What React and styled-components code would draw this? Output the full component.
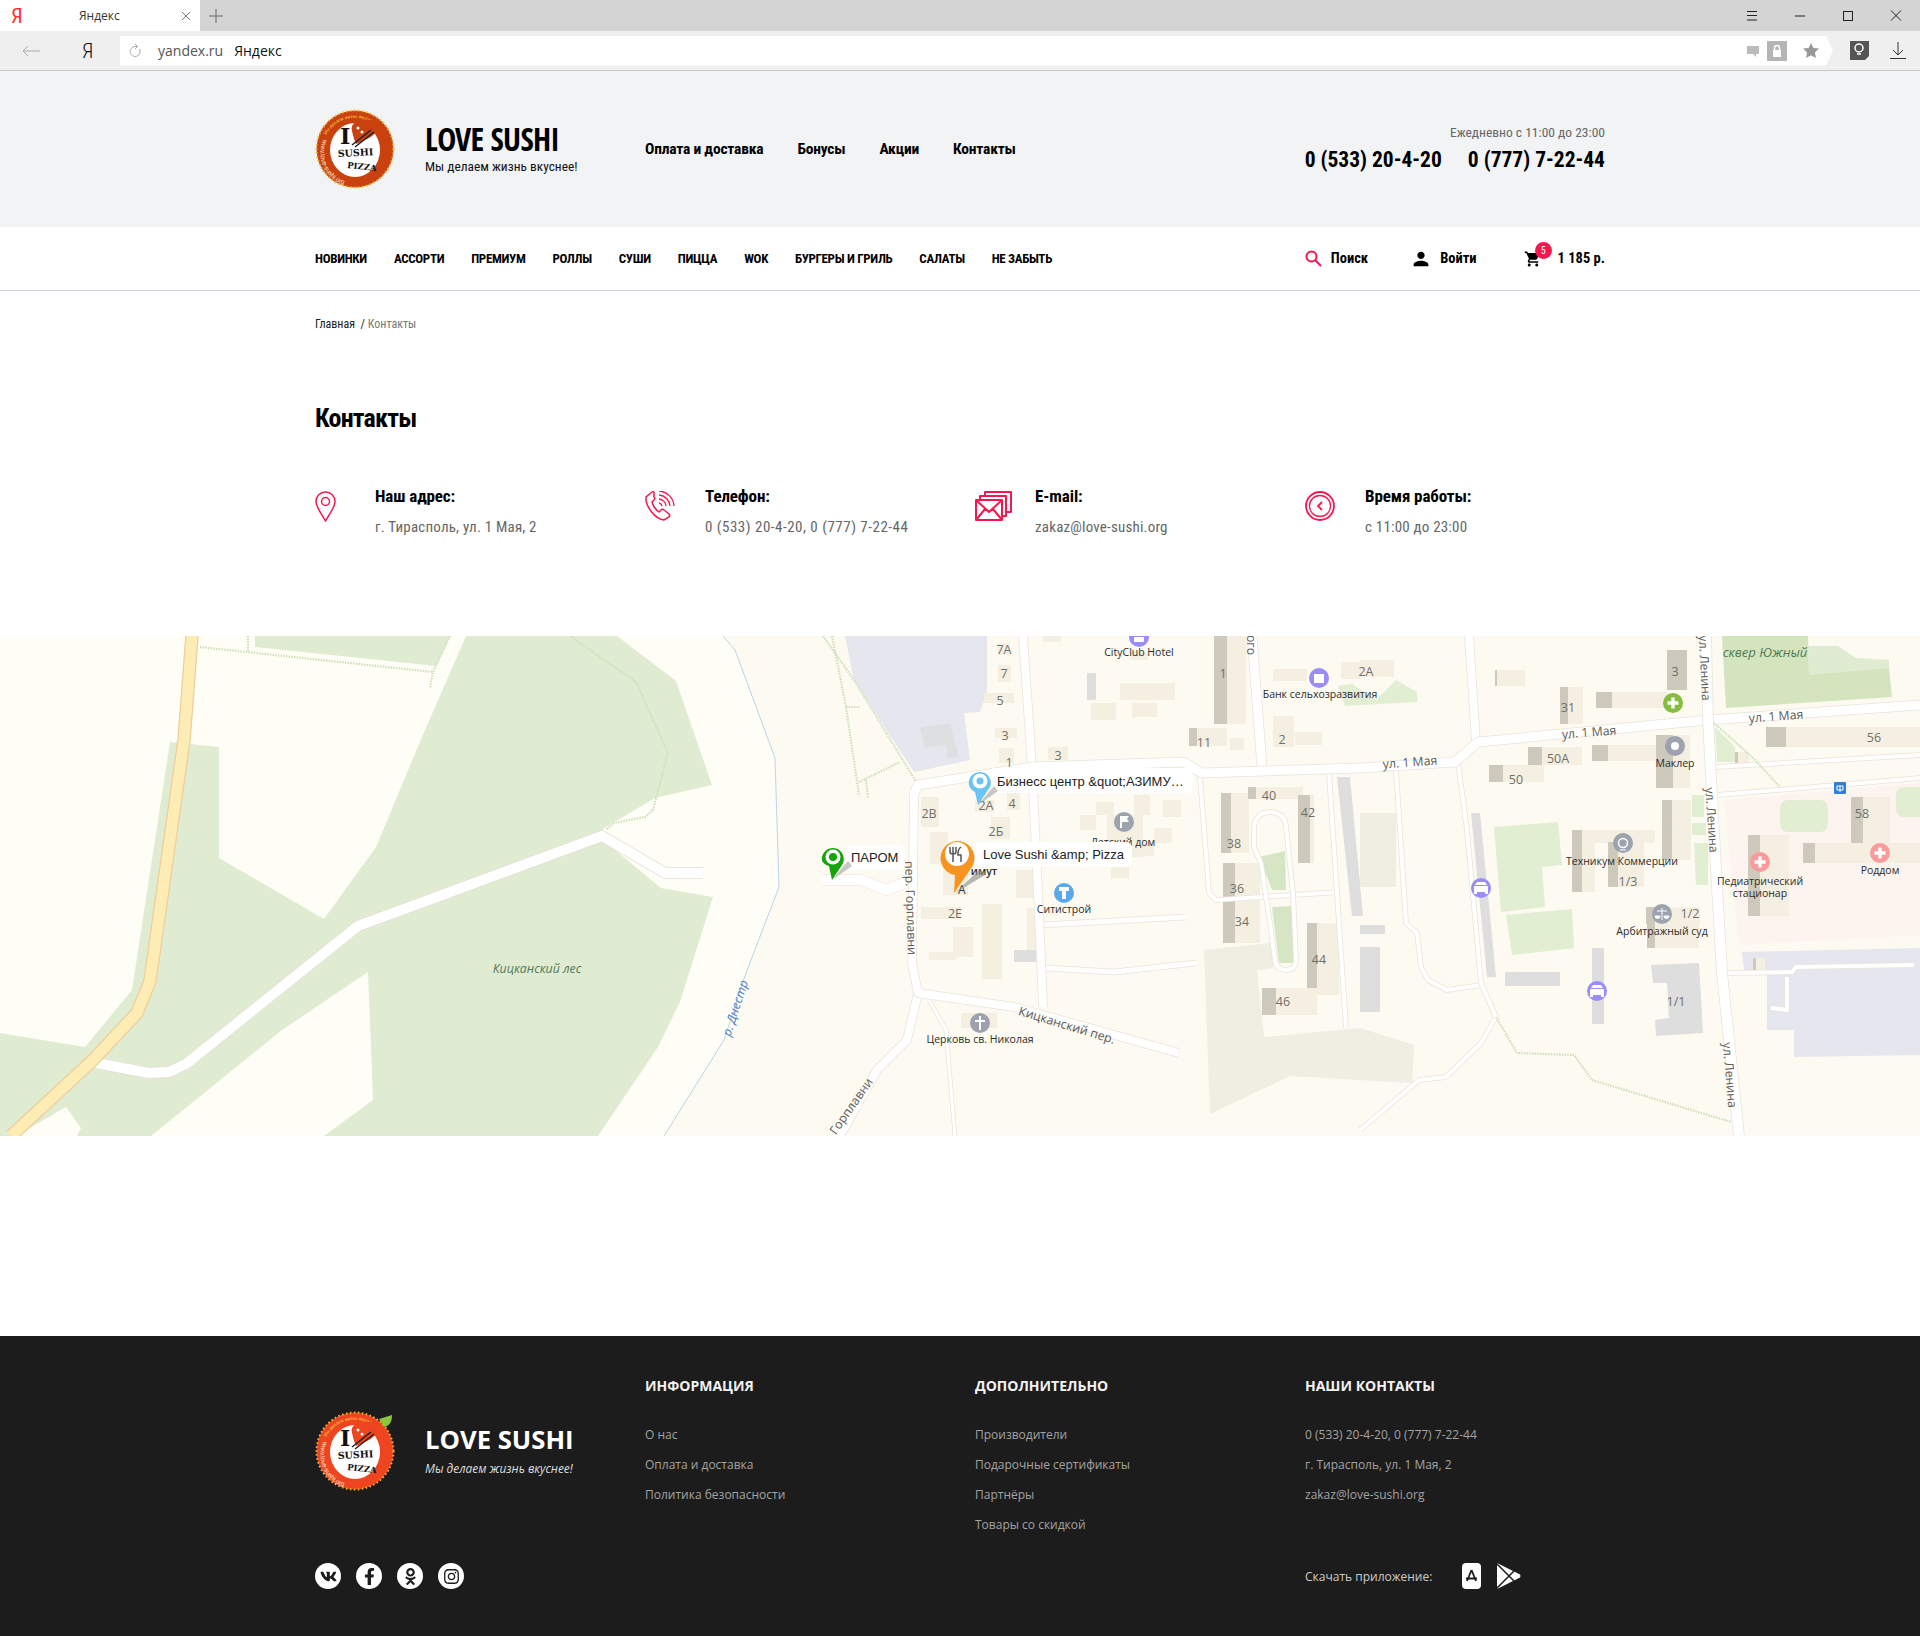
import React from "react";
import styled, { createGlobalStyle } from "styled-components";
import { FaVk, FaFacebookF, FaOdnoklassniki, FaInstagram } from "react-icons/fa";
import { MdPerson, MdShoppingCart } from "react-icons/md";

const din = `"Roboto Condensed", "Open Sans Condensed", "Liberation Sans", sans-serif`;
const open = `"Open Sans", "Noto Sans", sans-serif`;

const GlobalStyle = createGlobalStyle`
    html, body { margin: 0; padding: 0; background: #fff; }
    body { font-family: ${din}; color: #000; }
    a { color: inherit; text-decoration: none; }
    ul { list-style: none; margin: 0; padding: 0; }
`;

/* browser chrome */
const TabStrip = styled.div`
    height: 31px;
    background: #d4d4d4;
    display: flex;
    align-items: stretch;
    font-family: ${open};
`;
const Tab = styled.div`
    width: 200px;
    background: #fff;
    display: flex;
    align-items: center;
    font-size: 12px;
    color: #333;
    .ya { color: #f33; font: 400 21px ${din}; width: 79px; padding-left: 11px; box-sizing: border-box; }
    .name { flex: 1; }
    svg { margin-right: 9px; }
`;
const NewTab = styled.div`
    width: 31px;
    display: flex;
    align-items: center;
    justify-content: center;
`;
const WinButtons = styled.div`
    margin-left: auto;
    display: flex;
    align-items: center;
    gap: 28px;
    padding-right: 14px;
`;
const ToolBar = styled.div`
    height: 40px;
    background: #efefef;
    border-bottom: 1px solid #c9c9c9;
    box-sizing: border-box;
    display: flex;
    align-items: center;
    font-family: ${open};
`;
const NavBack = styled.div`
    width: 120px;
    display: flex;
    align-items: center;
    padding-left: 22px;
    box-sizing: border-box;
    .ya { margin-left: 42px; font: 300 21px ${din}; color: #111; }
`;
const AddressBar = styled.div`
    width: 1713px;
    height: 30px;
    background: #fff;
    display: flex;
    align-items: center;
    font-size: 14px;
    clip-path: polygon(0 0, calc(100% - 7px) 0, 100% 50%, calc(100% - 7px) 100%, 0 100%);
    padding-left: 9px;
    padding-right: 14px;
    box-sizing: border-box;
    .host { margin-left: 17px; color: #555; }
    .title { margin-left: 11px; color: #111; }
    .tools { margin-left: auto; display: flex; align-items: center; gap: 8px; }
`;
const ToolIcons = styled.div`
    flex: 1;
    display: flex;
    align-items: center;
    justify-content: flex-end;
    gap: 21px;
    padding-right: 14px;
`;

/* site header */
const Container = styled.div`
    width: 1290px;
    margin: 0 auto;
`;
const TopBand = styled.header`
    height: 156px;
    background: #f2f3f5;
    & > div { height: 100%; display: flex; align-items: center; }
`;
const Brand = styled.div`
    width: 330px;
    display: flex;
    align-items: center;
    gap: 30px;
    svg { flex: none; }
`;
const BrandName = styled.div`
    font-family: "Open Sans Condensed", ${din};
    font-size: 32px;
    font-weight: 700;
    line-height: 34px;
    letter-spacing: -0.7px;
`;
const BrandTag = styled.div`
    font-size: 13.4px;
    line-height: 18px;
    color: #111;
    margin-top: 2px;
`;
const TopMenu = styled.ul`
    display: flex;
    gap: 34px;
    font-size: 15.5px;
    font-weight: 700;
    letter-spacing: -0.2px;
`;
const Phones = styled.div`
    margin-left: auto;
    text-align: right;
    .hours { font-size: 13.5px; color: #666; line-height: 18px; }
    .nums { display: flex; gap: 26px; font-size: 21.5px; font-weight: 700; line-height: 30px; margin-top: 4px; }
`;
const NavBand = styled.nav`
    height: 64px;
    border-bottom: 1px solid #cfd6df;
    box-sizing: border-box;
    & > div { height: 100%; display: flex; align-items: center; }
`;
const NavList = styled.ul`
    display: flex;
    gap: 27px;
    font-size: 13px;
    font-weight: 700;
    letter-spacing: -0.33px;
    text-transform: uppercase;
`;
const UserTools = styled.div`
    margin-left: auto;
    display: flex;
    align-items: center;
    font-size: 14.5px;
    font-weight: 700;
`;
const ToolItem = styled.div`
    display: flex;
    align-items: center;
    gap: ${(p) => p.$gap || 10}px;
    margin-left: ${(p) => p.$left || 0}px;
    position: relative;
`;
const Badge = styled.span`
    position: absolute;
    left: 11px;
    top: -8px;
    width: 17px;
    height: 17px;
    border-radius: 50%;
    background: #f5174f;
    color: #fff;
    font: 400 10px/17px ${din};
    text-align: center;
`;

/* page body */
const Crumbs = styled.div`
    font-size: 12px;
    line-height: 18px;
    padding-top: 24px;
    color: #222;
    span { color: #777; }
`;
const Title = styled.h1`
    font-size: 26px;
    line-height: 36px;
    font-weight: 700;
    letter-spacing: -0.8px;
    margin: 67px 0 0;
`;
const InfoGrid = styled.div`
    display: grid;
    grid-template-columns: repeat(4, 330px);
    margin-top: 49px;
    height: 151px;
`;
const InfoItem = styled.div`
    display: flex;
    align-items: flex-start;
    svg { flex: none; width: ${(p) => p.$w || 30}px; margin-right: ${(p) => 60 - (p.$w || 30)}px; margin-top: 6px; }
    h3 { margin: 0; font-size: 17px; line-height: 22px; font-weight: 700; letter-spacing: -0.1px; }
    p { margin: 9px 0 0; font-size: 15px; line-height: 22px; color: #666; letter-spacing: ${(p) => p.$spread || 0.2}px; }
`;
const MapBox = styled.div`
    height: 500px;
    overflow: hidden;
    svg { display: block; }
`;
const Spacer = styled.div`
    height: 200px;
`;

/* map parts */
const House = styled.text`
    font: 400 12.5px ${open};
    fill: #6f6f68;
    text-anchor: middle;
    dominant-baseline: central;
`;
const Street = styled.text`
    font: 400 12.3px ${open};
    fill: #5c5c58;
    text-anchor: middle;
    dominant-baseline: central;
    font-style: ${(p) => (p.$italic ? "italic" : "normal")};
`;
const PoiLabel = styled.text`
    font: 400 10.5px ${open};
    fill: #2b2b2b;
    text-anchor: middle;
`;
const PinText = styled.text`
    font: 400 13px "Liberation Sans", sans-serif;
    fill: #222;
    dominant-baseline: central;
`;

/* footer */
const FooterBand = styled.footer`
    height: 300px;
    background: #1c1c1c;
    color: #a3a3a3;
    font-family: ${open};
`;
const FooterGrid = styled.div`
    display: grid;
    grid-template-columns: repeat(4, 330px);
    grid-template-rows: 187px 26px;
    padding-top: 40px;
    font-size: 12px;
`;
const FooterBrand = styled.div`
    display: flex;
    align-items: center;
    gap: 30px;
    align-self: start;
    margin-top: 35px;
    .name { font-size: 25.7px; font-weight: 700; color: #fff; line-height: 32px; margin-top: -2px; }
    .tag { font-size: 11.9px; font-style: italic; color: #ddd; line-height: 18px; margin-top: 3px; }
`;
const FooterCol = styled.div`
    h4 { margin: 0 0 30px; font-size: 14px; line-height: 20px; font-weight: 700; color: #f2f2f2; }
    li { line-height: 18px; margin-bottom: 12px; }
`;
const Socials = styled.div`
    grid-column: 1 / 4;
    display: flex;
    gap: 15px;
`;
const Social = styled.a`
    width: 26px;
    height: 26px;
    border-radius: 50%;
    background: #fff;
    color: #1c1c1c;
    font-size: 17px;
    display: flex;
    align-items: center;
    justify-content: center;
`;
const AppRow = styled.div`
    display: flex;
    align-items: center;
    color: #ccc;
    span { width: 157px; }
    svg + svg { margin-left: 15px; }
`;

const Logo = ({ bright }) => {
    const ring = bright ? "#ee4420" : "#c9410f";
    const id = bright ? "B" : "A";
    return (
        <svg width="80" height="80" viewBox="0 0 80 80">
            <circle cx="40" cy="40" r="38.500" fill={ring} stroke="#f2b632" strokeWidth="2" strokeDasharray="1.500 2.500" />
            <ellipse cx="40" cy="41" rx="25" ry="27" fill="#fff" />
            <defs>
                <path id={`low${id}`} d="M8.500 30A33 33 0 0 0 66 62" />
                <path id={`top${id}`} d="M11 26A33 33 0 0 1 72 34" />
            </defs>
            <text fontFamily="Liberation Sans" fontSize="6.500" fill="#ffe9d0">
                <textPath href={`#low${id}`}>www.love-sushi.org</textPath>
            </text>
            <text fontFamily="Liberation Sans" fontSize="4.500" fill="#ffd34d">
                <textPath href={`#top${id}`}>Мы делаем жизнь вкуснее!</textPath>
            </text>
            <path d="M37 22c-2-8 6-12 12-8 4-6 15-4 14 5-1 7-12 12-22 16-2-4-3-9-4-13z" fill={ring} />
            <circle cx="43" cy="19" r="1.500" fill="#fff" />
            <circle cx="47" cy="23" r="1.500" fill="#fff" />
            <path d="M37 36l19-15M40 38l19-15" stroke="#222" strokeWidth="1.500" />
            <text x="25" y="35" fontFamily="DejaVu Serif" fontWeight="700" fontSize="22" fill="#111">I</text>
            <text x="23" y="48" fontFamily="DejaVu Serif" fontWeight="700" fontSize="9.500" fill="#111" transform="rotate(-3 23 48)">SUSHI</text>
            <text x="32" y="59" fontFamily="DejaVu Serif" fontWeight="700" fontSize="8.500" fill="#111" transform="rotate(6 32 59)">PIZZA</text>
            {bright && <path d="M64 8l13-4c0 6-2 11-8 12z" fill="#8cc63f" />}
        </svg>
    );
};

const Road = ({ d, w = 10, edge = "#e9e4da" }) => (
    <g fill="none" strokeLinejoin="round">
        <path d={d} stroke={edge} strokeWidth={w + 1.500} />
        <path d={d} stroke="#fff" strokeWidth={w} />
    </g>
);
const Trail = ({ d }) => <path d={d} fill="none" stroke="#cfe0b8" strokeWidth="2.200" strokeDasharray="1.500 1.200" />;

const Poi = ({ x, y, c, children }) => (
    <g transform={`translate(${x} ${y})`}>
        <circle r="10" fill={c} />
        {children}
    </g>
);
const Plus = () => <path d="M-5.500 0h11M0-5.500v11" stroke="#fff" strokeWidth="3.400" />;
const Car = () => (
    <g fill="#fff">
        <path d="M-6-3l2-3h8l2 3z" />
        <rect x="-7" y="-2" width="14" height="6" rx="1" />
        <rect x="-7" y="4" width="3" height="2" />
        <rect x="4" y="4" width="3" height="2" />
    </g>
);

/* x, y, w, h, width of the dark side */
const buildings = [
    [998, 7, 12, 12], [998, 29, 13, 17], [984, 57, 30, 10], [995, 92, 22, 10], [999, 112, 15, 15], [1048, 111, 20, 13], [1043, 0, 18, 6], [1130, 16, 18, 8],
    [1120, 47, 55, 17], [1091, 67, 25, 17], [1132, 67, 25, 14], [1214, 0, 32, 88, 13], [1189, 92, 38, 18, 8], [1230, 102, 14, 12],
    [1273, 80, 21, 31], [1295, 96, 27, 13], [1273, 33, 34, 12], [1341, 26, 20, 17], [1360, 24, 34, 17], [1495, 34, 30, 16, 2], [1560, 51, 23, 37, 8],
    [1596, 56, 72, 16, 16], [1667, 14, 20, 40, 20], [1766, 91, 154, 20, 20], [1528, 111, 54, 18, 14], [1592, 109, 64, 16, 16], [1489, 129, 55, 17, 14],
    [1656, 99, 34, 53, 17], [1572, 194, 23, 62, 10], [1595, 194, 60, 13], [1608, 206, 36, 45, 10], [1662, 164, 29, 60, 10], [1646, 271, 54, 17, 10], [1647, 284, 52, 28, 8],
    [1851, 161, 39, 47, 12], [1803, 207, 117, 20, 12], [1748, 199, 41, 81, 12], [1735, 116, 14, 12, 3], [1753, 322, 12, 13, 3],
    [1221, 157, 28, 60, 10], [1248, 151, 55, 12, 8], [1298, 159, 16, 68, 12], [1223, 227, 37, 80, 12], [1307, 287, 32, 72, 10], [1262, 352, 55, 27, 14],
    [921, 161, 18, 30], [930, 196, 18, 32], [943, 227, 25, 32], [991, 181, 19, 22], [975, 164, 19, 12], [1007, 157, 13, 17], [921, 271, 40, 12], [953, 291, 20, 30], [929, 316, 27, 8],
    [982, 268, 20, 75], [1016, 234, 19, 28], [1027, 272, 11, 42], [1080, 179, 16, 15], [1096, 166, 18, 13], [1107, 179, 36, 42], [1134, 159, 16, 20], [1163, 164, 18, 17],
    [1154, 192, 18, 15], [1136, 207, 18, 13], [1111, 224, 18, 18], [961, 377, 36, 15],
];
const grays = [
    [1087, 37, 9, 27], [1505, 336, 55, 14], [1592, 312, 12, 76], [1360, 289, 25, 9], [1360, 311, 20, 65], [1014, 314, 25, 12],
];
const houses = [
    ["7А", 1004, 13], ["7", 1004, 37], ["5", 1000, 64], ["3", 1005, 99], ["1", 1009, 126], ["3", 1058, 119], ["1", 1223, 37], ["11", 1204, 106], ["2", 1282, 103],
    ["2А", 986, 169], ["4", 1012, 167], ["2В", 929, 177], ["2Б", 996, 195], ["2Е", 955, 277], ["40", 1269, 159], ["42", 1308, 176], ["38", 1234, 207], ["36", 1237, 252],
    ["34", 1242, 285], ["44", 1319, 323], ["46", 1283, 365], ["2А", 1366, 35], ["3", 1675, 35], ["31", 1568, 71], ["56", 1874, 101], ["50А", 1558, 122], ["50", 1516, 143],
    ["58", 1862, 177], ["1/3", 1628, 245], ["1/2", 1690, 277], ["1/1", 1676, 365],
];

const MapArt = () => (
    <svg width="1920" height="500" viewBox="0 0 1920 500">
        <rect width="1920" height="500" fill="#fefef6" />
        {/* city side of the river */}
        <path d="M723 0L735 14 775 122 779 251 746 337 724 404 664 500H1920V0z" fill="#fcfaf1" />
        <path d="M723 0L735 14 775 122 779 251 746 337 724 404 664 500" fill="none" stroke="#b9d4ea" />
        {/* forest */}
        <path d="M466 0H617L676 45 712 149 655 162 606 191 602 194 603 204 661 252 713 261 680 366 658 411 598 500H324L373 464 368 336 282 394 151 500H77L81 492 66 471 16 500H0V397L85 411 132 354 170 106 219 111V222L324 283 376 211 422 101z" fill="#e0ecd1" />
        <path d="M255 0H450L436 30 255 11z" fill="#e0ecd1" />
        <Trail d="M200 11L433 36M450 0L433 36 430 52M248 0V16M570 0L636 46 668 117 653 174 645 181 614 187 606 194" />
        {/* lavender areas */}
        <path d="M845 0H987V56L980 76 964 77 970 124 914 136 854 44z" fill="#e6e6ee" />
        <path d="M920 92L950 87 959 121 948 122 946 109 925 112z" fill="#dedfe0" />
        <path d="M1742 316L1920 312V419L1794 421V394H1767V336L1744 334z" fill="#e6e6ee" />
        <Trail d="M823 0L854 44 918 149M832 0L846 71 859 159M846 71H860M859 146L900 126M866 144L868 162" />
        {/* parks, hospital */}
        <path d="M1722 0H1808L1809 34 1889 32 1892 61 1726 72z" fill="#d4e5bd" />
        <path d="M1808 10H1838L1856 22 1889 24V32L1809 39z" fill="#e0ecd1" />
        <path d="M1724 164L1920 147V299L1739 309z" fill="#fdf3ef" />
        <path d="M1494 191L1558 186 1562 229 1542 231 1545 271 1501 276zM1506 279L1572 273 1574 312 1512 319z" fill="#e2eed2" />
        <rect x="1780" y="164" width="48" height="32" rx="8" fill="#e2eed2" />
        <rect x="1896" y="151" width="30" height="30" rx="8" fill="#e2eed2" />
        <path d="M1692 159H1704V181H1692zM1692 187H1706V199H1692zM1694 207H1708V249H1696zM1715 91L1735 111V126H1717zM1338 50L1352 48 1376 64 1396 44 1417 56V66L1345 70z" fill="#e2eed2" />
        <path d="M1259 221L1285 215 1286 254 1272 254zM1272 271L1293 270 1295 327 1279 327z" fill="#d6e6c4" />
        <path d="M1204 314L1273 307V332L1257 334 1264 401 1360 392 1414 409 1412 447 1290 440 1210 478z" fill="#f0ede3" />
        <path d="M1360 177H1396V251H1360z" fill="#f0ede3" />
        {/* buildings */}
        {buildings.map(([x, y, w, h, s], i) => (
            <g key={i}>
                <rect x={x} y={y} width={w} height={h} fill="#f5efe1" />
                {s && <rect x={x} y={y} width={s} height={h} fill="#cdc9bc" />}
            </g>
        ))}
        {grays.map(([x, y, w, h], i) => <rect key={i} x={x} y={y} width={w} height={h} fill="#dedede" />)}
        <path d="M1337 141H1350L1363 280H1352zM1471 177H1480L1496 341H1487zM1651 329L1699 327 1703 397 1656 400 1655 384 1669 382 1667 347 1653 347z" fill="#dedede" />
        {/* roads */}
        <Road d="M1708 84L1920 69" w={9} />
        <Road d="M1396 134L1406 287 1417 297 1421 331 1428 344 1447 354 1481 349" w={4} />
        <Road d="M1458 127L1467 194 1481 347 1496 381 1481 407 1446 441 1419 444 1360 494" w={4} />
        <Road d="M1200 141L1209 257 1216 264 1339 256" w={4} />
        <Road d="M1329 137L1337 257 1346 391" w={4} />
        <Road d="M1254 191Q1256 176 1271 176 1286 178 1286 191L1293 257 1296 324Q1296 334 1286 334 1276 334 1275 324L1271 294 1261 227 1254 211z" w={4} />
        <Road d="M1041 289L1186 281" w={5} />
        <Road d="M1046 332L1114 336 1196 327" w={5} />
        <Road d="M1715 131L1920 119M1717 159L1920 142" w={4} />
        <Road d="M1728 337L1792 336 1796 331 1914 329M1787 341V374L1771 372" w={4} />
        <Road d="M1252 0L1262 131" w={9} />
        <Road d="M1469 0L1476 106" w={8} />
        <Road d="M1023 0L1032 131 1039 277 1043 371" w={8} />
        <Road d="M929 364L946 394 955 500" w={3} />
        <Road d="M918 357L907 404 877 434 840 500" w={8} />
        <Road d="M914 157L912 327 918 357 1014 371 1179 417" w={8} />
        <Road d="M823 244H861L886 254 907 246" w={10} edge="#eee9e0" />
        <Road d="M914 157L918 149 1032 131 1184 126 1202 137 1360 132 1455 126 1478 106 1708 84" w={9} />
        <Road d="M1706 0L1708 84 1717 251 1722 337 1739 500" w={10} />
        <Trail d="M1714 87L1753 122 1780 151M1496 381L1517 417 1574 419 1592 444 1731 486" />
        {/* highway and forest road */}
        <Road d="M96 427L149 437 169 436 186 428 358 290 602 200 665 237H703" w={10} edge="#e6ded6" />
        <path d="M192 0L184 104 150 345 137 377 93 424 11 500" fill="none" stroke="#efcd9c" strokeWidth="13.500" />
        <path d="M192 0L184 104 150 345 137 377 93 424 11 500" fill="none" stroke="#fdedb5" strokeWidth="11" />
        {/* labels */}
        <Street x="537" y="332" $italic style={{ fill: "#4f7a5c" }}>Кицканский лес</Street>
        <Street x="735" y="372" $italic transform="rotate(-72 735 372)" style={{ fill: "#4a7fc9" }}>р. Днестр</Street>
        <Street x="851" y="470" transform="rotate(-55 851 470)">Горплавни</Street>
        <Street x="911" y="272" transform="rotate(88 911 272)">пер. Горплавни</Street>
        <Street x="1067" y="389" transform="rotate(17 1067 389)">Кицканский пер.</Street>
        <Street x="1251" y="9" transform="rotate(90 1251 9)">ого</Street>
        <Street x="1589" y="96" transform="rotate(-4.500 1589 96)">ул. 1 Мая</Street>
        <Street x="1776" y="80" transform="rotate(-4 1776 80)">ул. 1 Мая</Street>
        <Street x="1410" y="126" transform="rotate(-4 1410 126)">ул. 1 Мая</Street>
        <Street x="1705" y="32" transform="rotate(87 1705 32)">ул. Ленина</Street>
        <Street x="1712" y="184" transform="rotate(86 1712 184)">ул. Ленина</Street>
        <Street x="1730" y="439" transform="rotate(85 1730 439)">ул. Ленина</Street>
        <Street x="1765" y="16" $italic style={{ fill: "#4f7a5c", fontSize: "13px" }}>сквер Южный</Street>
        {houses.map(([t, x, y], i) => <House key={i} x={x} y={y}>{t}</House>)}
        {/* points of interest */}
        <Poi x={1139} y={1} c="#9a8cfb"><rect x="-5" y="0" width="10" height="5" fill="#fff" /></Poi>
        <PoiLabel x="1139" y="20">CityClub Hotel</PoiLabel>
        <Poi x={1319} y={42} c="#9a8cfb"><rect x="-5" y="-4" width="10" height="9" fill="#fff" /></Poi>
        <PoiLabel x="1320" y="62">Банк сельхозразвития</PoiLabel>
        <Poi x={1124} y={186} c="#9da3ae"><path d="M-4 6V-6h9l-2 3 2 3h-7v6z" fill="#fff" /></Poi>
        <PoiLabel x="1123" y="210">Детский дом</PoiLabel>
        <Poi x={1064} y={257} c="#5aa9ee"><path d="M-5-6H5V-2H2V6H-2V-2H-5z" fill="#fff" /></Poi>
        <PoiLabel x="1064" y="277">Ситистрой</PoiLabel>
        <Poi x={980} y={387} c="#9da3ae"><path d="M-5-2H5M0-7V7" stroke="#fff" strokeWidth="2" /></Poi>
        <PoiLabel x="980" y="407">Церковь св. Николая</PoiLabel>
        <Poi x={1673} y={67} c="#84bd3f"><Plus /></Poi>
        <Poi x={1675} y={110} c="#9da3ae"><circle r="4" fill="#fff" /></Poi>
        <PoiLabel x="1675" y="131">Маклер</PoiLabel>
        <Poi x={1623} y={207} c="#9da3ae"><circle r="4.500" fill="none" stroke="#fff" strokeWidth="1.500" /><path d="M-3 7H3" stroke="#fff" /></Poi>
        <PoiLabel x="1622" y="229">Техникум Коммерции</PoiLabel>
        <Poi x={1481} y={252} c="#9a8cfb"><Car /></Poi>
        <Poi x={1597} y={355} c="#9a8cfb"><Car /></Poi>
        <Poi x={1662} y={278} c="#9da3ae"><path d="M0-6V6M-5-3H5M-7 2a2.500 2.500 0 0 0 5 0zM2 2a2.500 2.500 0 0 0 5 0z" stroke="#fff" fill="#fff" /></Poi>
        <PoiLabel x="1662" y="299">Арбитражный суд</PoiLabel>
        <Poi x={1760} y={226} c="#f99a9c"><Plus /></Poi>
        <PoiLabel x="1760" y="249">Педиатрический</PoiLabel>
        <PoiLabel x="1760" y="261">стационар</PoiLabel>
        <Poi x={1880} y={217} c="#f99a9c"><Plus /></Poi>
        <PoiLabel x="1880" y="238">Роддом</PoiLabel>
        <rect x="1834" y="146" width="12" height="12" rx="1" fill="#2f7fd4" />
        <path d="M1837 150h6v4h-6zM1840 150v6" stroke="#fff" fill="none" />
        {/* pins with captions */}
        <rect x="846" y="209" width="59" height="25" rx="6" fill="#fff" />
        <PinText x="851" y="221">ПАРОМ</PinText>
        <path d="M832 244L848 225 852 230z" fill="#999" opacity=".55" />
        <path d="M822 225a11 11 0 1 1 20 4l-10 15-3-14a11 11 0 0 1-7-5z" fill="#17a30e" />
        <circle cx="833" cy="221" r="7.500" fill="#fff" />
        <circle cx="833" cy="221" r="4" fill="#17a30e" />

        <rect x="989" y="132" width="204" height="25" rx="6" fill="#fff" />
        <PinText x="997" y="145">Бизнесс центр {"&quot;"}АЗИМУ…</PinText>
        <path d="M978 169L994 150 998 155z" fill="#999" opacity=".55" />
        <path d="M969 149a11 11 0 1 1 21 2l-12 18-3-13a11 11 0 0 1-6-7z" fill="#6cc3f5" />
        <circle cx="980" cy="145" r="7.500" fill="#fff" />
        <circle cx="980" cy="145" r="3.500" fill="#6cc3f5" />

        <PoiLabel x="984" y="239" style={{ fontWeight: 600 }}>имут</PoiLabel>
        <text x="958" y="258" fontFamily="Open Sans" fontSize="12" fill="#333">А</text>
        <path d="M955 257L980 233 985 239z" fill="#888" opacity=".6" />
        <rect x="975" y="206" width="157" height="25" rx="6" fill="#fff" />
        <PinText x="983" y="218">Love Sushi {"&amp;"} Pizza</PinText>
        <path d="M941 226a17 17 0 1 1 31 5l-18 26 1-18a17 17 0 0 1-14-13z" fill="#f7931e" />
        <circle cx="957" cy="218" r="12" fill="#fff" />
        <path d="M953 211v15M950 211v5q0 2 3 2t3-2v-5M961 211q-3 2-3 7v1h3v7" fill="none" stroke="#555" strokeWidth="1.500" />
    </svg>
);

const red = "#f5174f";

const Wide = styled.p`
    && { letter-spacing: .5px; }
`;

export default function App() {
    return (
        <>
            <GlobalStyle />
            <TabStrip>
                <Tab>
                    <span className="ya">Я</span>
                    <span className="name">Яндекс</span>
                    <svg width="10" height="10" viewBox="0 0 10 10"><path d="M1 1l8 8M9 1l-8 8" stroke="#777" /></svg>
                </Tab>
                <NewTab>
                    <svg width="14" height="14" viewBox="0 0 14 14"><path d="M7 0v14M0 7h14" stroke="#666" /></svg>
                </NewTab>
                <WinButtons>
                    <svg width="20" height="12" viewBox="0 0 20 12"><path d="M5 1.500h10M5 5.500h10M5 10h10" stroke="#222" /></svg>
                    <svg width="20" height="12" viewBox="0 0 20 12"><path d="M5 6h10" stroke="#222" /></svg>
                    <svg width="20" height="12" viewBox="0 0 20 12"><rect x="5.500" y="1.500" width="9" height="9" fill="none" stroke="#222" /></svg>
                    <svg width="20" height="12" viewBox="0 0 20 12"><path d="M5 .5l10 10M15 .5L5 10.500" stroke="#222" /></svg>
                </WinButtons>
            </TabStrip>
            <ToolBar>
                <NavBack>
                    <svg width="18" height="12" viewBox="0 0 18 12"><path d="M18 6H1M6 1L1 6l5 5" fill="none" stroke="#aaa" /></svg>
                    <span className="ya">Я</span>
                </NavBack>
                <AddressBar>
                    <svg width="12" height="14" viewBox="0 0 12 14"><path d="M10.500 5A5 5 0 1 1 6 2.500h2M6 0l2.500 2.500L6 5" fill="none" stroke="#aaa" /></svg>
                    <span className="host">yandex.ru</span>
                    <span className="title">Яндекс</span>
                    <div className="tools">
                        <svg width="12" height="12" viewBox="0 0 12 12"><path d="M0 1h12v8H9v3L6 9H0z" fill="#bbb" /></svg>
                        <svg width="20" height="20" viewBox="0 0 20 20"><rect width="20" height="20" fill="#b5b5b5" /><rect x="6" y="9" width="8" height="7" fill="#fff" /><path d="M7.500 9V7a2.500 2.500 0 0 1 5 0v2" fill="none" stroke="#fff" strokeWidth="1.500" /></svg>
                        <svg width="16" height="15" viewBox="0 0 16 15" style={{ marginLeft: 8 }}><path d="M8 0l2.400 5 5.600.6-4.100 3.800L13 15 8 12.200 3 15l1.100-5.600L0 5.600 5.600 5z" fill="#999" /></svg>
                    </div>
                </AddressBar>
                <ToolIcons>
                    <svg width="20" height="19" viewBox="0 0 20 19"><path d="M1 0h19v15l-4 4H1z" fill="#555" /><circle cx="10" cy="7" r="4" fill="none" stroke="#fff" strokeWidth="1.500" /><path d="M8 13h4" stroke="#fff" strokeWidth="1.500" /></svg>
                    <svg width="16" height="17" viewBox="0 0 16 17"><path d="M8 0v12M3 8l5 5 5-5M0 16.500h16" fill="none" stroke="#333" /></svg>
                </ToolIcons>
            </ToolBar>

            <TopBand>
                <Container>
                    <Brand>
                        <Logo />
                        <div>
                            <BrandName>LOVE SUSHI</BrandName>
                            <BrandTag>Мы делаем жизнь вкуснее!</BrandTag>
                        </div>
                    </Brand>
                    <TopMenu>
                        <li>Оплата и доставка</li>
                        <li>Бонусы</li>
                        <li>Акции</li>
                        <li>Контакты</li>
                    </TopMenu>
                    <Phones>
                        <div className="hours">Ежедневно с 11:00 до 23:00</div>
                        <div className="nums">
                            <span>0 (533) 20-4-20</span>
                            <span>0 (777) 7-22-44</span>
                        </div>
                    </Phones>
                </Container>
            </TopBand>
            <NavBand>
                <Container>
                    <NavList>
                        {["Новинки", "Ассорти", "Премиум", "Роллы", "Суши", "Пицца", "Wok", "Бургеры и гриль", "Салаты", "Не забыть"].map((t) => (
                            <li key={t}>{t}</li>
                        ))}
                    </NavList>
                    <UserTools>
                        <ToolItem $gap={9}>
                            <svg width="17" height="17" viewBox="0 0 17 17"><circle cx="6.500" cy="6.500" r="5" fill="none" stroke={red} strokeWidth="2" /><path d="M10 10l6 6" stroke={red} strokeWidth="2" /></svg>
                            Поиск
                        </ToolItem>
                        <ToolItem $left={45} $gap={11}>
                            <MdPerson size={22} style={{ margin: "0 -3px" }} />
                            Войти
                        </ToolItem>
                        <ToolItem $left={47} $gap={16}>
                            <MdShoppingCart size={18} />
                            <Badge>5</Badge>
                            1 185 р.
                        </ToolItem>
                    </UserTools>
                </Container>
            </NavBand>

            <Container>
                <Crumbs>Главная&nbsp; / <span>Контакты</span></Crumbs>
                <Title>Контакты</Title>
                <InfoGrid>
                    <InfoItem $w={21}>
                        <svg height="31" viewBox="0 0 21 31"><path d="M10.500 30C6 22 1 16 1 10.500a9.500 9.500 0 0 1 19 0C20 16 15 22 10.500 30z" fill="none" stroke={red} strokeWidth="1.500" /><circle cx="10.500" cy="10.500" r="4" fill="none" stroke={red} strokeWidth="1.500" /></svg>
                        <div><h3>Наш адрес:</h3><p>г. Тирасполь, ул. 1 Мая, 2</p></div>
                    </InfoItem>
                    <InfoItem $w={30}>
                        <svg height="30" viewBox="0 0 30 30"><path d="M7 1L1 6c-1 9 9 22 18 23l5-3c1-1 1-2 0-3l-5-4c-1-1-2-1-3 0l-2 2c-3-2-6-6-7-10l2-2c1-1 1-2 0-3L9 1C8.500.5 7.500.5 7 1z" fill="none" stroke={red} strokeWidth="1.500" /><path d="M14 8a8 8 0 0 1 7 7M14 4a12 12 0 0 1 11 11M14 0a16 16 0 0 1 15 15M14 12a4 4 0 0 1 3 3" fill="none" stroke={red} strokeWidth="1.300" /></svg>
                        <div><h3>Телефон:</h3><Wide>0 (533) 20-4-20, 0 (777) 7-22-44</Wide></div>
                    </InfoItem>
                    <InfoItem $w={37}>
                        <svg height="30" viewBox="0 0 37 30"><g fill="none" stroke={red} strokeWidth="2" strokeLinejoin="round"><rect x="1" y="9" width="26" height="20" /><path d="M1 9l13 12L27 9M1 29l9-11M27 29l-9-11M5 9V5h26v20h-4M10 5V1h26v20h-5" /></g></svg>
                        <div><h3>E-mail:</h3><p>zakaz@love-sushi.org</p></div>
                    </InfoItem>
                    <InfoItem $w={30}>
                        <svg height="30" viewBox="0 0 30 30"><g fill="none" stroke={red}><circle cx="15" cy="15" r="14" strokeWidth="1.800" /><circle cx="15" cy="15" r="10.500" strokeWidth="1.300" /><path d="M17 11l-4 4 4 4" strokeWidth="1.800" /></g></svg>
                        <div><h3>Время работы:</h3><p>с 11:00 до 23:00</p></div>
                    </InfoItem>
                </InfoGrid>
            </Container>
            <MapBox><MapArt /></MapBox>
            <Spacer />

            <FooterBand>
                <Container>
                    <FooterGrid>
                        <FooterBrand>
                            <Logo bright />
                            <div>
                                <div className="name">LOVE SUSHI</div>
                                <div className="tag">Мы делаем жизнь вкуснее!</div>
                            </div>
                        </FooterBrand>
                        <FooterCol>
                            <h4>ИНФОРМАЦИЯ</h4>
                            <ul><li>О нас</li><li>Оплата и доставка</li><li>Политика безопасности</li></ul>
                        </FooterCol>
                        <FooterCol>
                            <h4>ДОПОЛНИТЕЛЬНО</h4>
                            <ul><li>Производители</li><li>Подарочные сертификаты</li><li>Партнёры</li><li>Товары со скидкой</li></ul>
                        </FooterCol>
                        <FooterCol>
                            <h4>НАШИ КОНТАКТЫ</h4>
                            <ul><li>0 (533) 20-4-20, 0 (777) 7-22-44</li><li>г. Тирасполь, ул. 1 Мая, 2</li><li>zakaz@love-sushi.org</li></ul>
                        </FooterCol>
                        <Socials>
                            <Social><FaVk /></Social>
                            <Social><FaFacebookF /></Social>
                            <Social><FaOdnoklassniki /></Social>
                            <Social><FaInstagram /></Social>
                        </Socials>
                        <AppRow>
                            <span>Скачать приложение:</span>
                            <svg width="19" height="26" viewBox="0 0 19 26"><rect width="19" height="26" rx="4" fill="#fff" /><path d="M9.500 7L5 18M9.500 7L14 18M4 15.500h11" stroke="#1c1c1c" strokeWidth="1.800" fill="none" /></svg>
                            <svg width="25" height="26" viewBox="0 0 25 26"><path d="M1 0L24 11.500Q25 13 24 14.500L1 26z" fill="#fff" /><path d="M0 0L13 13 0 26M18 8L13 13 18 18" fill="none" stroke="#1c1c1c" strokeWidth="1.500" /></svg>
                        </AppRow>
                    </FooterGrid>
                </Container>
            </FooterBand>
        </>
    );
}
